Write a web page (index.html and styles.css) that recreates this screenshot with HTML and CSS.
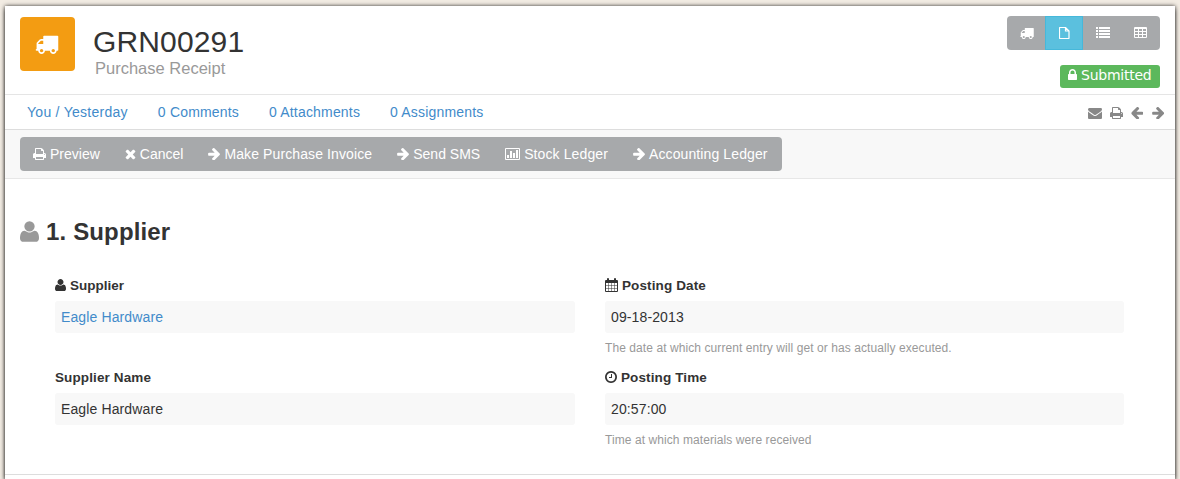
FILE: index.html
```html
<!DOCTYPE html>
<html lang="en">
<head>
<meta charset="utf-8">
<title>GRN00291 - Purchase Receipt</title>
<link rel="stylesheet" href="styles.css">
</head>
<body>
<svg class="sprite" aria-hidden="true">
  <symbol id="truck" viewBox="64 128 1728 1536"><path d="M640 1408q0-52-38-90t-90-38-90 38-38 90 38 90 90 38 90-38 38-90zm-384-512h384v-256h-158q-13 0-22 9l-195 195q-9 9-9 22v30zm1280 512q0-52-38-90t-90-38-90 38-38 90 38 90 90 38 90-38 38-90zm256-1088v1024q0 15-4 26.500t-13.500 18.500-16.500 11.500-23.500 6-22.500 2-25.500 0-22.500-.5q0 106-75 181t-181 75-181-75-75-181h-384q0 106-75 181t-181 75-181-75-75-181h-64q-3 0-22.500.5t-25.500 0-22.500-2-23.500-6-16.500-11.500-13.500-18.500-4-26.500q0-26 19-45t45-19v-320q0-8-.5-35t0-38 2.500-34.500 6.500-37 14-30.500 22.500-30l198-198q19-19 50.500-32t58.500-13h160v-192q0-26 19-45t45-19h1024q26 0 45 19t19 45z"/></symbol>
  <symbol id="print" viewBox="64 128 1664 1536"><path d="M448 1536h896v-256h-896v256zm0-640h896v-384h-160q-40 0-68-28t-28-68v-160h-640v640zm1152 64q0-26-19-45t-45-19-45 19-19 45 19 45 45 19 45-19 19-45zm128 0v416q0 13-9.500 22.500t-22.500 9.500h-224v160q0 40-28 68t-68 28h-960q-40 0-68-28t-28-68v-160h-224q-13 0-22.500-9.500t-9.500-22.500v-416q0-79 56.500-135.500t135.500-56.500h64v-544q0-40 28-68t68-28h672q40 0 88 20t76 48l152 152q28 28 48 76t20 88v256h64q79 0 135.500 56.500t56.500 135.500z"/></symbol>
  <symbol id="times" viewBox="224 288 1344 1344"><path d="M1490 1322q0 40-28 68l-136 136q-28 28-68 28t-68-28l-294-294-294 294q-28 28-68 28t-68-28l-136-136q-28-28-28-68t28-68l294-294-294-294q-28-28-28-68t28-68l136-136q28-28 68-28t68 28l294 294 294-294q28-28 68-28t68 28l136 136q28 28 28 68t-28 68l-294 294 294 294q28 28 28 68z"/></symbol>
  <symbol id="arrow" viewBox="112 192 1500 1536"><path d="M1600 960q0 54-37 91l-651 651q-39 37-91 37-51 0-90-37l-75-75q-38-38-38-91t38-91l293-293h-704q-52 0-84.500-37.500t-32.500-90.500v-128q0-53 32.500-90.500t84.500-37.500h704l-293-294q-38-36-38-90t38-90l75-75q38-38 90-38 53 0 91 38l651 651q37 35 37 90z"/></symbol>
  <symbol id="user" viewBox="192 128 1408 1536"><path d="M1600 1405q0 120-73 189.500t-194 69.500h-874q-121 0-194-69.500t-73-189.500q0-53 3.500-103.500t14-109 26.500-108.500 43-97.500 62-81 85.500-53.500 111.500-20q9 0 42 21.500t74.500 48 108 48 133.500 21.500 133.500-21.500 108-48 74.500-48 42-21.500q61 0 111.500 20t85.500 53.500 62 81 43 97.500 26.500 108.500 14 109 3.500 103.500zm-320-893q0 159-112.500 271.500t-271.500 112.500-271.500-112.500-112.500-271.500 112.500-271.500 271.500-112.500 271.500 112.500 112.500 271.500z"/></symbol>
  <symbol id="lock" viewBox="320 128 1152 1408"><path d="M640 768h512v-192q0-106-75-181t-181-75-181 75-75 181v192zm832 96v576q0 40-28 68t-68 28h-960q-40 0-68-28t-28-68v-576q0-40 28-68t68-28h32v-192q0-184 132-316t316-132 316 132 132 316v192h32q40 0 68 28t28 68z"/></symbol>
  <symbol id="envelope" viewBox="0 256 1792 1408"><path d="M1792 710v794q0 66-47 113t-113 47h-1472q-66 0-113-47t-47-113v-794q44 49 101 87 362 246 497 345 57 42 92.500 65.500t94.500 48 110 24.500h2q51 0 110-24.500t94.500-48 92.500-65.500q170-123 498-345 57-39 100-87zm0-294q0 79-49 151t-122 123q-376 261-468 325-10 7-42.500 31t-54 38.500-52 32.500-57.500 27-50 9h-2q-23 0-50-9t-57.500-27-52-32.500-54-38.500-42.500-31q-91-64-262-182.500t-205-142.500q-62-42-117-115.500t-55-136.500q0-78 41.500-130t118.500-52h1472q65 0 112.500 47t47.500 113z"/></symbol>
  <symbol id="clock" viewBox="128 128 1536 1536"><path d="M1024 544v448q0 14-9 23t-23 9h-320q-14 0-23-9t-9-23v-64q0-14 9-23t23-9h224v-352q0-14 9-23t23-9h64q14 0 23 9t9 23zm416 352q0-148-73-273t-198-198-273-73-273 73-198 198-73 273 73 273 198 198 273 73 273-73 198-198 73-273zm224 0q0 209-103 385.500t-279.500 279.500-385.500 103-385.500-103-279.500-279.500-103-385.500 103-385.500 279.500-279.500 385.500-103 385.500 103 279.500 279.500 103 385.500z"/></symbol>
  <symbol id="file" viewBox="0 0 11 12"><path d="M.5 1V11Q.5 11.500 1 11.500H9.500Q10 11.500 10 11V4L6.500.5H1Q.5.500.5 1ZM6.500.5V4H10" fill="none" stroke="currentColor" stroke-width="1.200"/></symbol>
  <symbol id="list" viewBox="0 0 14 11"><path d="M0 0h2v2H0zM3 0h11v2H3zM0 3h2v2H0zM3 3h11v2H3zM0 6h2v2H0zM3 6h11v2H3zM0 9h2v2H0zM3 9h11v2H3z"/></symbol>
  <symbol id="table" viewBox="0 0 13 11"><path fill-rule="evenodd" d="M1 0h11q1 0 1 1v9q0 1-1 1H1q-1 0-1-1V1q0-1 1-1ZM1 2v2h3V2ZM5 2v2h3V2ZM9 2v2h3V2ZM1 5v2h3V5ZM5 5v2h3V5ZM9 5v2h3V5ZM1 8v2h3V8ZM5 8v2h3V8ZM9 8v2h3V8Z"/></symbol>
  <symbol id="chart" viewBox="0 0 15 12"><path fill-rule="evenodd" d="M1 0h13q1 0 1 1v10q0 1-1 1H1q-1 0-1-1V1q0-1 1-1ZM1 1v10h13V1ZM2 7h2v3H2ZM5 3h2v7H5ZM8 5h2v5H8ZM11 2h2v8h-2Z"/></symbol>
  <symbol id="calendar" viewBox="0 0 13 14"><path fill-rule="evenodd" d="M1 2h1V1q0-1 1-1t1 1v1h5V1q0-1 1-1t1 1v1h1q1 0 1 1v10q0 1-1 1H1q-1 0-1-1V3q0-1 1-1ZM1 5v2h2V5ZM3.500 5v2h2.500V5ZM6.500 5v2h2.500V5ZM9.500 5v2H12V5ZM1 7.500V10h2V7.500ZM3.500 7.500V10H6V7.500ZM6.500 7.500V10H9V7.500ZM9.500 7.500V10H12V7.500ZM1 10.500V13h2v-2.500ZM3.500 10.500V13H6v-2.500ZM6.500 10.500V13H9v-2.500ZM9.500 10.500V13H12v-2.500Z"/></symbol>
</svg>
<div class="page">
  <header class="head">
    <div class="app-icon"><svg class="app-truck"><use href="#truck"/></svg></div>
    <div class="titles"><h1>GRN00291</h1><div class="doctype">Purchase Receipt</div></div>
    <div class="head-right">
      <div class="views">
        <span class="view"><svg class="truck"><use href="#truck"/></svg></span>
        <span class="view active"><svg class="file"><use href="#file"/></svg></span>
        <span class="view"><svg class="list"><use href="#list"/></svg></span>
        <span class="view"><svg class="table"><use href="#table"/></svg></span>
      </div>
      <div class="status"><svg class="lock"><use href="#lock"/></svg><span>Submitted</span></div>
    </div>
  </header>
  <nav class="info">
    <a class="when">You / Yesterday</a><a>0 Comments</a><a>0 Attachments</a><a>0 Assignments</a>
    <div class="tools">
      <svg class="envelope"><use href="#envelope"/></svg>
      <svg class="print"><use href="#print"/></svg>
      <svg class="arrow back"><use href="#arrow"/></svg>
      <svg class="arrow"><use href="#arrow"/></svg>
    </div>
  </nav>
  <div class="toolbar">
    <div class="actions">
      <span class="action"><svg class="print"><use href="#print"/></svg>Preview</span>
      <span class="action"><svg class="times"><use href="#times"/></svg>Cancel</span>
      <span class="action wide"><svg class="arrow"><use href="#arrow"/></svg>Make Purchase Invoice</span>
      <span class="action"><svg class="arrow"><use href="#arrow"/></svg>Send SMS</span>
      <span class="action wide"><svg class="chart"><use href="#chart"/></svg>Stock Ledger</span>
      <span class="action wide"><svg class="arrow"><use href="#arrow"/></svg>Accounting Ledger</span>
    </div>
  </div>
  <main class="section">
    <h2><svg class="big-user"><use href="#user"/></svg>1. Supplier</h2>
    <div class="fields">
      <div class="field">
        <div class="label short"><svg class="user"><use href="#user"/></svg>Supplier</div>
        <div class="value link">Eagle Hardware</div>
      </div>
      <div class="field">
        <div class="label"><svg class="calendar"><use href="#calendar"/></svg>Posting Date</div>
        <div class="value">09-18-2013</div>
        <div class="help">The date at which current entry will get or has actually executed.</div>
      </div>
      <div class="field">
        <div class="label">Supplier Name</div>
        <div class="value">Eagle Hardware</div>
      </div>
      <div class="field">
        <div class="label"><svg class="clock"><use href="#clock"/></svg>Posting Time</div>
        <div class="value">20:57:00</div>
        <div class="help">Time at which materials were received</div>
      </div>
    </div>
  </main>
</div>
</body>
</html>
```
FILE: styles.css
```css
* { box-sizing: border-box; }
body {
  margin: 0;
  padding: 6px 5px 0;
  height: 479px;
  overflow: hidden;
  background: #f2ece3;
  color: #333;
  font: 14px/20px "Liberation Sans", Arial, sans-serif;
}
svg { fill: currentColor; flex: none; display: block; }
.sprite { display: none; }
.page { height: 473px; background: #fff; box-shadow: 0 4px 4px rgba(0, 0, 0, .5), 0 0 4px rgba(0, 0, 0, .8); }
.head { display: flex; height: 89px; padding: 11px 15px 0; border-bottom: 1px solid #e5e5e5; }
.app-icon {
  width: 55px; height: 54px; border-radius: 4px;
  background: #f39c12; color: #fff;
  display: flex; align-items: center; justify-content: center;
}
.app-truck { width: 24px; height: 20px; margin: 0 1px 1px 0; }
.titles { margin-left: 18px; padding-top: 8px; }
h1 { margin: 0; font-size: 30px; line-height: 33px; font-weight: 400; letter-spacing: .15px; }
.doctype { margin-left: 2px; font-size: 16.5px; line-height: 20px; color: #999; }
.head-right { margin: -1px 0 0 auto; display: flex; flex-direction: column; align-items: flex-end; }
.views { display: flex; height: 34px; border-radius: 4px; overflow: hidden; background: #a7a9ab; color: #fff; }
.view { width: 38px; display: flex; align-items: center; justify-content: center; }
.view:last-child { width: 39px; }
.active { background: #5bc0de; border: 1px solid #46b8da; }
.truck { width: 14px; height: 12px; margin-left: 2px; }
.file { width: 11px; height: 12px; }
.list { width: 14px; height: 11px; margin: 0 0 1px 2px; }
.table { width: 13px; height: 11px; margin-bottom: 1px; }
.status {
  display: flex; gap: 4px; margin-top: 15px; padding: 4px 8px 0;
  width: 100px; height: 23px; border-radius: 3px;
  background: #5cb85c; color: #fff;
  font: 14px/13px "DejaVu Sans", sans-serif;
  letter-spacing: -.25px;
}
.lock { width: 9px; height: 11px; }
.info { display: flex; gap: 30px; height: 35px; padding: 7px 11px 0 22px; border-bottom: 1px solid #ddd; letter-spacing: .18px; }
.when { letter-spacing: .27px; }
.info a, .link { color: #428bca; }
.tools { display: flex; align-items: center; gap: 8px; height: 22px; margin-left: auto; color: #888; }
.envelope { width: 14px; height: 11px; }
.print { width: 13px; height: 12px; }
.times { width: 11px; height: 11px; }
.arrow { width: 12.3px; height: 12.5px; }
.back { transform: scaleX(-1); }
.chart { width: 15px; height: 12px; }
.toolbar { height: 49px; padding: 7px 15px; background: #f8f8f8; border-bottom: 1px solid #e7e7e7; }
.actions { display: inline-flex; gap: 25px; width: 762px; height: 34px; padding: 0 13px; border-radius: 4px; background: #a7a9ab; color: #fff; }
.action { display: flex; align-items: center; gap: 4px; white-space: nowrap; }
.action .arrow { width: 12px; }
.wide { letter-spacing: .11px; }
.section { height: 296px; padding: 36px 15px 0; border-bottom: 1px solid #ddd; }
h2 { display: flex; align-items: center; gap: 7px; margin: 0; font-size: 24px; line-height: 34px; letter-spacing: .15px; }
.big-user { width: 19px; height: 21px; margin-bottom: 2px; color: #999; }
.fields { display: grid; grid-template-columns: 520px 519px; column-gap: 30px; margin: 27px 0 0 35px; grid-auto-rows: 92px; }
.label { display: flex; align-items: center; gap: 4px; height: 20px; font-size: 13.500px; font-weight: 700; letter-spacing: .12px; }
.label svg { margin-bottom: 2px; }
.short { letter-spacing: 0; }
.value { height: 32px; margin-top: 5px; padding: 6px; border-radius: 3px; background: #f8f8f8; letter-spacing: .12px; }
.help { margin-top: 5px; font-size: 12px; letter-spacing: .08px; color: #999; }
.user { width: 11px; height: 12px; }
.calendar { width: 13px; height: 14px; }
.clock { width: 12px; height: 12px; }
```
